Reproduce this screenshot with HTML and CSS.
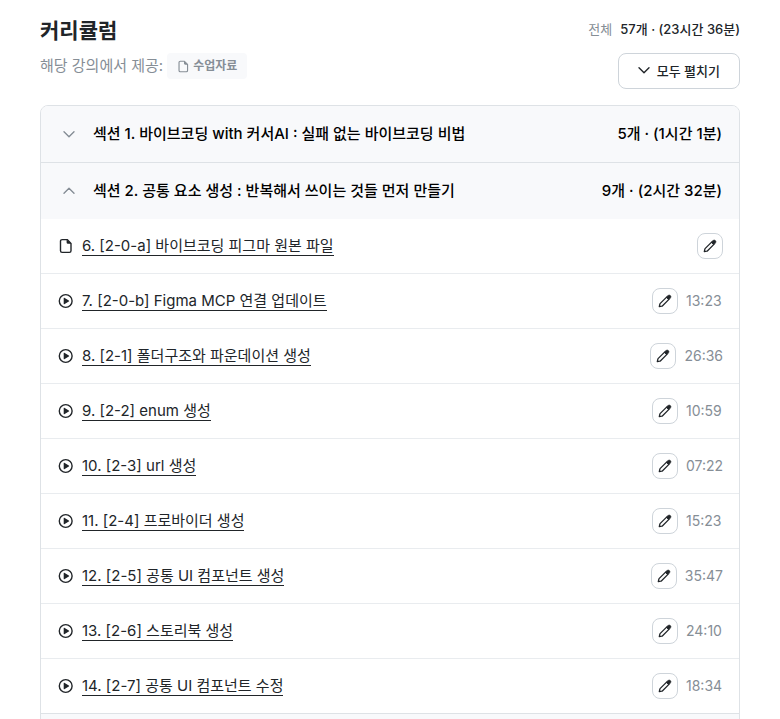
FILE: index.html
```html
<!DOCTYPE html>
<html lang="ko">
<head>
    <meta charset="UTF-8">
    <meta name="viewport" content="width=device-width, initial-scale=1.0">
    <title>커리큘럼</title>
    <link rel="stylesheet" href="styles.css">
</head>
<body>
    <svg class="sprite" aria-hidden="true">
        <symbol id="icon-file" viewBox="0 0 16 16">
            <path d="M4.2 1.6h5L13 5.4v7.4a1.6 1.6 0 0 1-1.6 1.6H4.1A1.6 1.6 0 0 1 2.5 12.8V3.2a1.6 1.6 0 0 1 1.6-1.6z" fill="none" stroke="currentColor" stroke-width="1.4" stroke-linejoin="round"/>
            <path d="M8.6 1.4v3a1.4 1.4 0 0 0 1.4 1.4H13.4z" fill="currentColor"/>
        </symbol>
        <symbol id="icon-play" viewBox="0 0 16 16">
            <circle cx="7.7" cy="8" r="6.4" fill="none" stroke="currentColor" stroke-width="1.4"/>
            <path d="M5.7 5.2v5.6a.4.4 0 0 0 .6.4l4.5-2.8a.4.4 0 0 0 0-.8L6.3 4.8a.4.4 0 0 0-.6.4z" fill="currentColor"/>
        </symbol>
        <symbol id="icon-pencil" viewBox="0 0 14 14">
            <path d="M8.6 3.1 2.3 9.4a2 2 0 0 0-.5.9L1.3 12.7 3.7 12.2a2 2 0 0 0 .9-.5L10.9 5.4z" fill="none" stroke="currentColor" stroke-width="1.3" stroke-linejoin="round"/>
            <path d="M8.2 3.2 9.9 1.6a1.75 1.75 0 0 1 2.5 2.5L10.8 5.8z" fill="currentColor" stroke="currentColor" stroke-width=".6" stroke-linejoin="round"/>
        </symbol>
        <symbol id="icon-down" viewBox="0 0 12 12">
            <path d="M1 3.8 6 8.8l5-5" fill="none" stroke="currentColor" stroke-width="1.4" stroke-linecap="round" stroke-linejoin="round"/>
        </symbol>
        <symbol id="icon-up" viewBox="0 0 12 12">
            <path d="M1 8.2 6 3.2l5 5" fill="none" stroke="currentColor" stroke-width="1.4" stroke-linecap="round" stroke-linejoin="round"/>
        </symbol>
    </svg>

    <main class="curriculum">
        <header class="curriculum-header">
            <div class="header-left">
                <h2>커리큘럼</h2>
                <p class="provided">해당 강의에서 제공:
                    <span class="chip"><svg class="icon-chip"><use href="#icon-file"/></svg>수업자료</span>
                </p>
            </div>
            <div class="header-right">
                <p class="total"><span class="total-label">전체</span>57개 · (23시간 36분)</p>
                <button class="expand-all" type="button"><svg class="icon-arrow"><use href="#icon-down"/></svg>모두 펼치기</button>
            </div>
        </header>

        <div class="accordion">
            <section>
                <button class="section-header" type="button" aria-expanded="false">
                    <svg class="icon-arrow"><use href="#icon-down"/></svg>
                    <span class="section-title">섹션 1. 바이브코딩 with 커서AI : 실패 없는 바이브코딩 비법</span>
                    <span class="section-total">5개 · (1시간 1분)</span>
                </button>
            </section>
            <section>
                <button class="section-header" type="button" aria-expanded="true">
                    <svg class="icon-arrow"><use href="#icon-up"/></svg>
                    <span class="section-title">섹션 2. 공통 요소 생성 : 반복해서 쓰이는 것들 먼저 만들기</span>
                    <span class="section-total">9개 · (2시간 32분)</span>
                </button>
                <ul class="lessons">
                    <li class="lesson">
                        <svg class="icon-lesson"><use href="#icon-file"/></svg>
                        <a href="#">6. [2-0-a] 바이브코딩 피그마 원본 파일</a>
                        <button class="edit" type="button" aria-label="노트"><svg class="icon-pencil"><use href="#icon-pencil"/></svg></button>
                    </li>
                    <li class="lesson">
                        <svg class="icon-lesson"><use href="#icon-play"/></svg>
                        <a href="#">7. [2-0-b] Figma MCP 연결 업데이트</a>
                        <button class="edit" type="button" aria-label="노트"><svg class="icon-pencil"><use href="#icon-pencil"/></svg></button>
                        <time>13:23</time>
                    </li>
                    <li class="lesson">
                        <svg class="icon-lesson"><use href="#icon-play"/></svg>
                        <a href="#">8. [2-1] 폴더구조와 파운데이션 생성</a>
                        <button class="edit" type="button" aria-label="노트"><svg class="icon-pencil"><use href="#icon-pencil"/></svg></button>
                        <time>26:36</time>
                    </li>
                    <li class="lesson">
                        <svg class="icon-lesson"><use href="#icon-play"/></svg>
                        <a href="#">9. [2-2] enum 생성</a>
                        <button class="edit" type="button" aria-label="노트"><svg class="icon-pencil"><use href="#icon-pencil"/></svg></button>
                        <time>10:59</time>
                    </li>
                    <li class="lesson">
                        <svg class="icon-lesson"><use href="#icon-play"/></svg>
                        <a href="#">10. [2-3] url 생성</a>
                        <button class="edit" type="button" aria-label="노트"><svg class="icon-pencil"><use href="#icon-pencil"/></svg></button>
                        <time>07:22</time>
                    </li>
                    <li class="lesson">
                        <svg class="icon-lesson"><use href="#icon-play"/></svg>
                        <a href="#">11. [2-4] 프로바이더 생성</a>
                        <button class="edit" type="button" aria-label="노트"><svg class="icon-pencil"><use href="#icon-pencil"/></svg></button>
                        <time>15:23</time>
                    </li>
                    <li class="lesson">
                        <svg class="icon-lesson"><use href="#icon-play"/></svg>
                        <a href="#">12. [2-5] 공통 UI 컴포넌트 생성</a>
                        <button class="edit" type="button" aria-label="노트"><svg class="icon-pencil"><use href="#icon-pencil"/></svg></button>
                        <time>35:47</time>
                    </li>
                    <li class="lesson">
                        <svg class="icon-lesson"><use href="#icon-play"/></svg>
                        <a href="#">13. [2-6] 스토리북 생성</a>
                        <button class="edit" type="button" aria-label="노트"><svg class="icon-pencil"><use href="#icon-pencil"/></svg></button>
                        <time>24:10</time>
                    </li>
                    <li class="lesson">
                        <svg class="icon-lesson"><use href="#icon-play"/></svg>
                        <a href="#">14. [2-7] 공통 UI 컴포넌트 수정</a>
                        <button class="edit" type="button" aria-label="노트"><svg class="icon-pencil"><use href="#icon-pencil"/></svg></button>
                        <time>18:34</time>
                    </li>
                </ul>
            </section>
            <section>
                <button class="section-header" type="button" aria-expanded="false" aria-label="섹션 3">
                    <svg class="icon-arrow"><use href="#icon-down"/></svg>
                </button>
            </section>
        </div>
    </main>
</body>
</html>
```
FILE: styles.css
```css
* {
    box-sizing: border-box;
}
body {
    margin: 0;
    height: 100vh;
    overflow: hidden;
    background: #fff;
    color: #212529;
    font-family: Inter, "Noto Sans CJK KR", sans-serif;
    font-size: 15px;
}
button {
    font-family: inherit;
    color: inherit;
    cursor: pointer;
}
h2, p, ul {
    margin: 0;
    padding: 0;
}
svg {
    flex: none;
}
.sprite {
    position: absolute;
    width: 0;
    height: 0;
}
.curriculum {
    padding: 16px 40px 0;
}
.curriculum-header {
    display: flex;
    justify-content: space-between;
    margin-bottom: 16px;
}
h2 {
    font-size: 21px;
    line-height: 29px;
    font-weight: 700;
}
.provided {
    display: flex;
    align-items: center;
    gap: 4px;
    margin-top: 8px;
    line-height: 26px;
    color: #868e96;
}
.chip {
    display: flex;
    align-items: center;
    gap: 3px;
    padding: 0 10px;
    border-radius: 4px;
    background: #f8f9fb;
    font-size: 12px;
    font-weight: 700;
}
.icon-chip {
    width: 13px;
    height: 13px;
}
.header-right {
    display: flex;
    flex-direction: column;
    align-items: flex-end;
}
.total {
    margin-bottom: 10px;
    font-size: 13px;
    line-height: 27px;
    font-weight: 500;
}
.total-label {
    margin-right: 8px;
    color: #868e96;
    font-weight: 400;
}
.expand-all {
    display: flex;
    align-items: center;
    justify-content: center;
    gap: 7px;
    height: 36px;
    padding: 0 19px 2px;
    border: 1px solid #ced4da;
    border-radius: 8px;
    background: #fff;
    font-size: 13px;
    font-weight: 500;
}
.icon-arrow {
    width: 12px;
    height: 12px;
}
.accordion {
    border: 1px solid #dee2e6;
    border-radius: 8px;
    overflow: hidden;
}
section + section {
    border-top: 1px solid #dee2e6;
}
.section-header {
    display: flex;
    align-items: center;
    width: 100%;
    height: 56px;
    padding: 0 17px 0 22px;
    border: 0;
    background: #f8f9fb;
    color: #000;
    font-size: 15px;
    font-weight: 500;
    text-align: left;
}
.section-header .icon-arrow {
    color: #868e96;
}
.section-title {
    flex: 1;
    margin-left: 18px;
}
.section-title, .section-total {
    padding-bottom: 3px;
}
.lessons {
    list-style: none;
}
.lesson {
    display: flex;
    align-items: center;
    height: 55px;
    padding: 0 16px 0 17px;
    border-bottom: 1px solid #e9ecef;
}
.lesson:last-child {
    height: 54px;
    border-bottom: 0;
}
.icon-lesson {
    width: 16px;
    height: 16px;
}
.lesson a {
    margin: 0 auto 0 8px;
    border-bottom: 1px solid #212529;
    color: #212529;
    line-height: 19px;
    text-decoration: none;
}
.edit {
    display: flex;
    align-items: center;
    justify-content: center;
    width: 26px;
    height: 26px;
    padding: 0;
    border: 1px solid #ced4da;
    border-radius: 8px;
    background: #fff;
}
.icon-pencil {
    width: 14px;
    height: 14px;
}
time {
    min-width: 37px;
    margin-left: 8px;
    padding-bottom: 1px;
    color: #868e96;
    font-size: 14px;
}
```
